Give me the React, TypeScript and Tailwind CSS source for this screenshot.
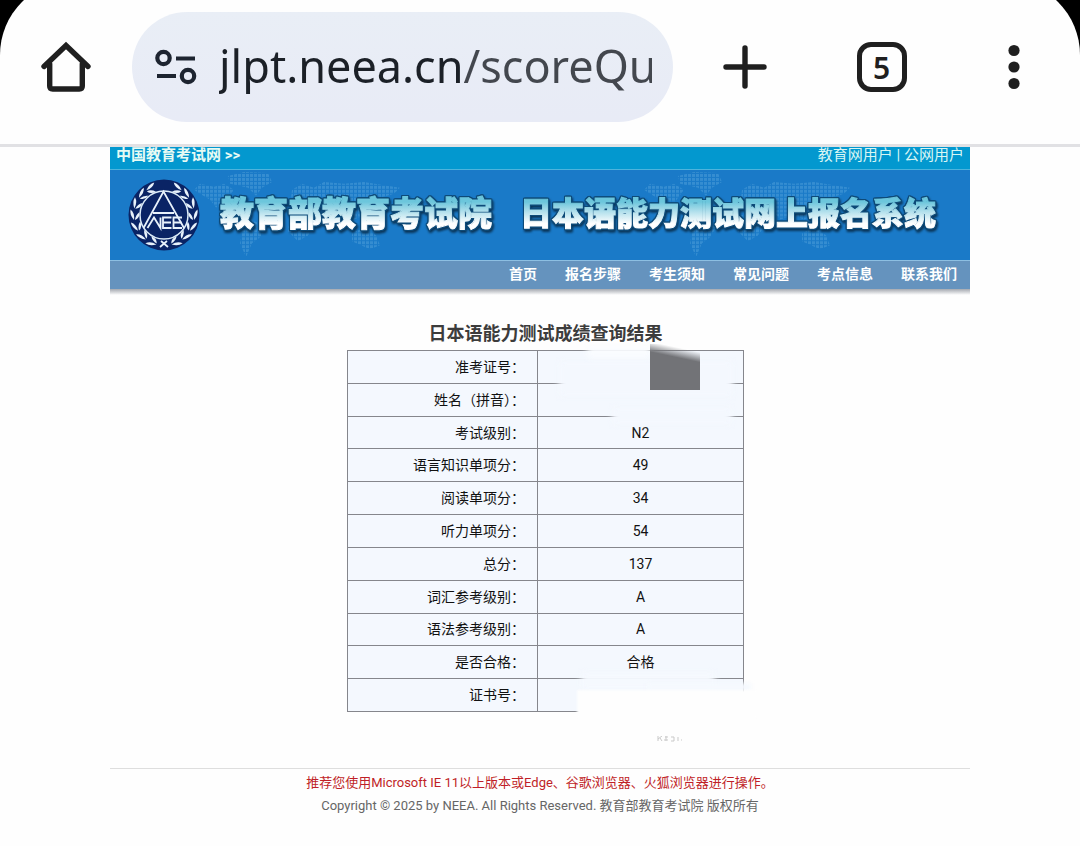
import React from "react";

const navItems = ["首页", "报名步骤", "考生须知", "常见问题", "考点信息", "联系我们"];

const rows: [string, string][] = [
  ["准考证号：", ""],
  ["姓名（拼音）：", ""],
  ["考试级别：", "N2"],
  ["语言知识单项分：", "49"],
  ["阅读单项分：", "34"],
  ["听力单项分：", "54"],
  ["总分：", "137"],
  ["词汇参考级别：", "A"],
  ["语法参考级别：", "A"],
  ["是否合格：", "合格"],
  ["证书号：", ""],
];

function BrowserBar() {
  return (
    <header className="flex h-36 items-center pb-2.5 font-['Noto_Sans',sans-serif] text-[#1f1f1f]">
      <button aria-label="主页" className="ml-10 shrink-0">
        <svg width="52" height="52" viewBox="0 0 52 52" fill="none" stroke="currentColor" strokeWidth="5.4" strokeLinecap="round" strokeLinejoin="miter">
          <path d="M4 25.500 26 4.500l22 21" />
          <path d="M9.700 23v22q0 3 3 3h26.600q3 0 3-3V23" />
        </svg>
      </button>
      <div className="ml-10 flex h-[110px] w-[541px] items-center rounded-full bg-linear-to-b from-[#e9eef6] to-[#e8ebf6] pl-[23px] pr-[21px]">
        <svg width="44" height="38" viewBox="0 0 44 38" fill="none" stroke="#1d2430" strokeWidth="4.200" className="shrink-0">
          <circle cx="8.500" cy="10" r="6.200" />
          <path d="M21 10.500h19M2 28h19" />
          <circle cx="33" cy="28" r="6.200" />
        </svg>
        <input
          aria-label="网址"
          readOnly
          value="jlpt.neea.cn/scoreQu"
          className="ml-5 h-20 min-w-0 flex-1 bg-linear-to-r from-[#1b2027] from-[245px] to-[#43474e] to-[246px] bg-clip-text pb-1 text-[45px] text-transparent outline-none"
        />
      </div>
      <div className="flex flex-1 items-center justify-between pl-12 pr-[54px]">
        <button aria-label="新标签页">
          <svg width="48" height="48" viewBox="0 0 48 48" fill="none" stroke="currentColor" strokeWidth="5.400" strokeLinecap="round">
            <path d="M24 5v38M5 24h38" />
          </svg>
        </button>
        <button aria-label="5 个标签页" className="mr-2 flex size-[50px] items-center justify-center rounded-[14px] border-[5px] border-[#1f1f1f] pt-0.5 text-[30px] leading-none font-semibold">
          5
        </button>
        <button aria-label="更多">
          <svg width="24" height="48" viewBox="0 0 24 48" fill="currentColor">
            <circle cx="12" cy="7.500" r="5.600" />
            <circle cx="12" cy="24" r="5.600" />
            <circle cx="12" cy="40.500" r="5.600" />
          </svg>
        </button>
      </div>
    </header>
  );
}

const leafAngles = [24, 46, 68, 90, 112, 134, 154];

function Laurel() {
  return (
    <g>
      {leafAngles.map((a) => (
        <g key={a} transform={`rotate(${a} 36 36)`}>
          <path d="M41 66Q36 70.500 30.500 69.500 34 65 41 66Z" />
          <path d="M41 65Q36 64.500 33 60.500 39 60 41 65Z" />
        </g>
      ))}
    </g>
  );
}

function Emblem() {
  return (
    <svg width="72" height="72" viewBox="0 0 72 72" className="shrink-0" role="img" aria-label="NEEA">
      <circle cx="36" cy="36" r="35.500" fill="#0a2465" />
      <g fill="#e8f2fb">
        <Laurel />
        <g transform="translate(72 0) scale(-1 1)">
          <Laurel />
        </g>
      </g>
      <circle cx="36" cy="36" r="24" fill="#0a2465" stroke="#dcecf8" strokeWidth="1.500" />
      <g fill="none" stroke="#e8f2fb" strokeWidth="1.800">
        <path d="M15.500 49 35.500 12.500 56 49M25 34h21" />
        <path d="M19.500 49l6.500-10.500L32.500 49V38.500" />
        <path d="M43.500 38.500H35V49h8.500M35 43.500h8M54 38.500h-8.500V49H54M45.500 43.500h8" />
        <path d="M32 68l7-6M40 68l-7-6" />
      </g>
    </svg>
  );
}

function WorldMap() {
  return (
    <svg className="absolute inset-0 size-full" viewBox="0 0 860 91" preserveAspectRatio="none" aria-hidden="true">
      <defs>
        <pattern id="dots" width="4" height="4" patternUnits="userSpaceOnUse">
          <rect width="3" height="3" fill="#62aee0" />
        </pattern>
        <g id="map">
          <path d="M0 20 6 14 20 17 30 14 40 20 34 28 30 34 22 38 16 30 6 24Z" />
          <path d="M34 6 50 2 74 3 78 12 68 18 62 26 54 18 36 14Z" />
          <path d="M98 20 108 14 120 18 130 12 150 14 170 12 206 18 200 24 186 28 182 40 170 46 160 50 150 46 136 50 128 40 108 34 96 36Z" />
          <path d="M44 52 58 50 72 58 66 68 58 74 52 88 46 74 48 64Z" />
          <path d="M96 46 114 42 124 52 114 66 104 72 94 62Z" />
          <path d="M158 64 170 58 182 66 186 76 176 80 158 72Z" />
        </g>
      </defs>
      <g fill="url(#dots)" opacity="0.38">
        <use href="#map" x="84" />
        <use href="#map" x="534" />
      </g>
    </svg>
  );
}

const bannerText =
  "bg-linear-to-b from-[#6cc6dc] from-25% to-white to-70% bg-clip-text leading-[48px] font-black whitespace-nowrap text-transparent [-webkit-text-stroke:1px_transparent] [filter:drop-shadow(1px_0_0_#0d4a78)_drop-shadow(-1px_0_0_#0d4a78)_drop-shadow(0_1px_0_#0d4a78)_drop-shadow(0_-1px_0_#0d4a78)_drop-shadow(1px_2px_1px_#0a3558)]";

function SiteHeader() {
  return (
    <div>
      <div className="flex h-[23px] items-start justify-between border-b border-[#4db4dd] bg-[#0398cf] px-1.5 text-[15px] leading-4 text-white">
        <a href="#neea" className="font-bold text-[#e6fbf4]">中国教育考试网 &gt;&gt;</a>
        <div className="text-[#d8f6f4]">
          <a href="#edu">教育网用户</a> | <a href="#public">公网用户</a>
        </div>
      </div>
      <div className="relative flex h-[91px] items-center border-b border-[#8dbfe2] bg-[#1a7ac8] pl-[18px]">
        <WorldMap />
        <div className="relative flex items-center">
          <Emblem />
          <h1 className="ml-5 flex gap-7 pb-0.5">
            <span className={`${bannerText} text-[34px]`}>教育部教育考试院</span>
            <span className={`${bannerText} text-[32px]`}>日本语能力测试网上报名系统</span>
          </h1>
        </div>
      </div>
      <nav className="flex h-7 items-center justify-end gap-7 bg-[#6593be] pr-[13px] pb-0.5 text-sm leading-5 font-bold text-white">
        {navItems.map((n) => (
          <a key={n} href="#nav">{n}</a>
        ))}
      </nav>
      <div className="h-1.5 bg-linear-to-b from-[#a5a9b0] to-white" />
    </div>
  );
}

function Results() {
  return (
    <main className="mx-auto mt-[25px] w-[408px] pl-[11px]">
      <h2 className="pb-0.5 text-center text-[18px] leading-7 font-bold text-[#3c3c3c]">日本语能力测试成绩查询结果</h2>
      <div className="relative">
        <table className="h-[362px] w-full table-fixed border-collapse bg-[#f4f8fe] text-sm leading-5 text-[#111]">
          <tbody>
            {rows.map(([k, v]) => (
              <tr key={k}>
                <th scope="row" className="w-[190px] border border-[#85868c] pr-3 text-right font-normal">{k}</th>
                <td className="border border-[#85868c] text-center">{v}</td>
              </tr>
            ))}
          </tbody>
        </table>
        <div className="absolute top-3 left-[212px] h-[34px] w-[174px] bg-[#f4f8fe] blur-[3px]" />
        <div className="absolute -top-1 left-[240px] h-3 w-16 bg-[#fafcff] blur-[3px]" />
        <div className="absolute top-[58px] left-[265px] h-4 w-[120px] bg-[#f4f8fe] blur-[3px]" />
        <div className="absolute -top-1.5 left-[303px] h-[46px] w-[50px] bg-[linear-gradient(192deg,transparent_8px,#727377_18px)]" />
        <div className="absolute top-[323px] left-[234px] h-4 w-[134px] bg-[#f5f9fe] blur-[3px]" />
        <div className="absolute top-[333px] left-[300px] h-2 w-[104px] bg-[#f5f9fe] blur-[2px]" />
        <div className="absolute top-[340px] left-[230px] h-7 w-[180px] bg-[#fefefe] blur-[1px]" />
      </div>
      <svg width="26" height="6" viewBox="0 0 26 6" className="mt-6 ml-[310px]" fill="none" stroke="#c9c9c9" aria-hidden="true">
        <path d="M1 0v5M1 3l4-3M3 2l2 3M8 1h3M7 4h4M9 0v5M14 1h3v4h-3M21 1v4M24 4h1" />
      </svg>
    </main>
  );
}

export default function App() {
  return (
    <div className="overflow-hidden bg-black font-[Roboto,'Noto_Sans_CJK_SC',sans-serif]">
      <div className="-mt-5 min-h-[866px] rounded-t-[75px] bg-[#fefefe] pt-5">
        <BrowserBar />
        <div className="h-[3px] bg-[#e1e1e4]" />
        <div className="mx-auto w-[860px] max-w-full">
          <SiteHeader />
          <Results />
          <footer className="mt-[26px] border-t border-[#dedede] pt-0.5 text-center text-[13px] leading-[23px] text-[#666]">
            <p className="text-[#c01f27]">推荐您使用Microsoft IE 11以上版本或Edge、谷歌浏览器、火狐浏览器进行操作。</p>
            <p>Copyright © 2025 by NEEA. All Rights Reserved. 教育部教育考试院 版权所有</p>
          </footer>
        </div>
      </div>
    </div>
  );
}
